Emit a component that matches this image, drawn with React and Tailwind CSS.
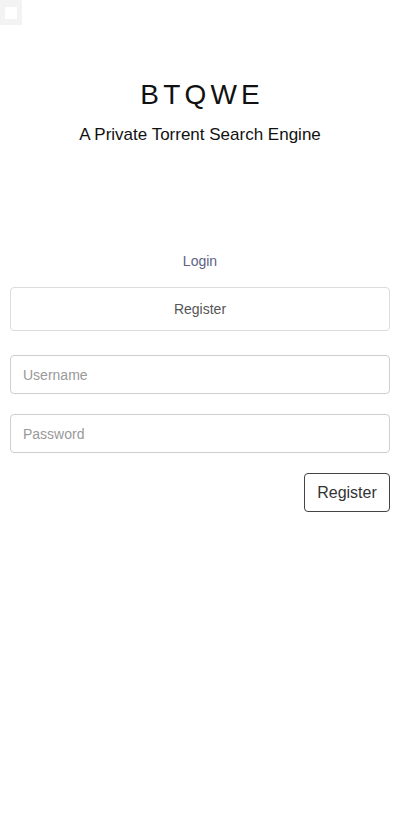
import React, { useState } from "react";

export default function App() {
  const [tab, setTab] = useState("register");

  return (
    <div className="min-h-[829px] w-[400px] bg-white font-['Liberation_Sans',Arial,sans-serif] relative">
      <div className="absolute left-0 top-0 w-[22px] h-[25px] bg-[#f3f3f3] flex items-center justify-center">
        <div className="w-[12px] h-[12px] bg-white" />
      </div>

      <div className="pt-[78px] flex flex-col items-center">
        <h1 className="text-[28px] leading-[34px] tracking-[0.15em] pl-[0.15em] text-[#111]">BTQWE</h1>
        <p className="mt-[12px] text-[17px] leading-[22px] text-[#111]">A Private Torrent Search Engine</p>
      </div>

      <div className="mt-[103px] px-[10px]">
        <button
          onClick={() => setTab("login")}
          className="w-full h-[24px] text-[14px] text-[#5c6283] flex items-center justify-center"
        >
          Login
        </button>
        <button
          onClick={() => setTab("register")}
          className="mt-[14px] w-full h-[44px] border border-[#dcdcdc] rounded-[4px] text-[14px] text-[#555] flex items-center justify-center"
        >
          Register
        </button>

        <div className="mt-[24px] flex flex-col gap-[20px]">
          <input
            placeholder="Username"
            className="w-full h-[39px] border border-[#cfcfcf] rounded-[4px] px-[12px] text-[14px] placeholder:text-[#999] outline-none"
          />
          <input
            type="password"
            placeholder="Password"
            className="w-full h-[39px] border border-[#cfcfcf] rounded-[4px] px-[12px] text-[14px] placeholder:text-[#999] outline-none"
          />
        </div>

        <div className="mt-[20px] flex justify-end">
          <button className="w-[86px] h-[39px] border border-[#444] rounded-[4px] text-[16px] text-[#333]">
            Register
          </button>
        </div>
      </div>
    </div>
  );
}
